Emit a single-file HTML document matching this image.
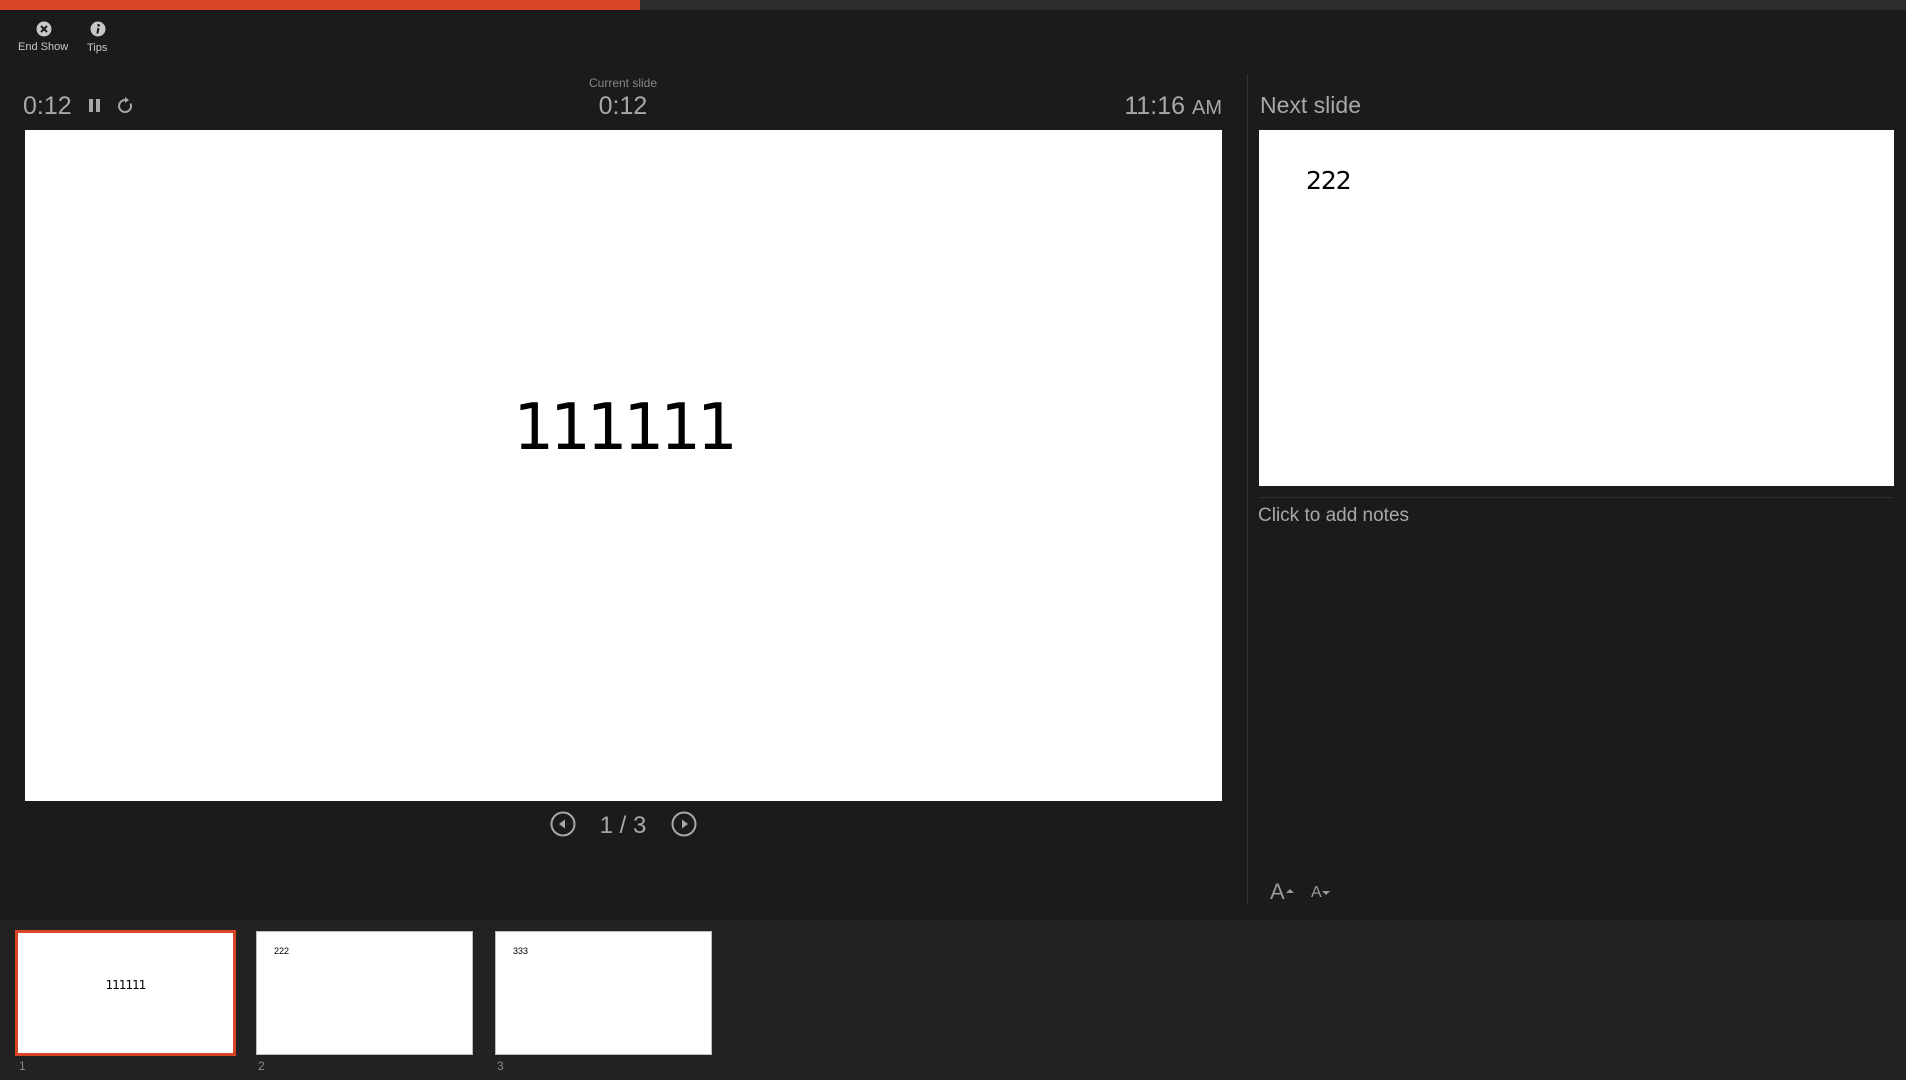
<!DOCTYPE html>
<html><head><meta charset="utf-8"><style>
*{margin:0;padding:0;box-sizing:border-box}
body{width:1906px;height:1080px;background:#1b1b1b;font-family:"Liberation Sans",sans-serif;color:#a8a8a8;position:relative;overflow:hidden}
.a{position:absolute}
.slide{background:#fff;position:absolute}
.num{font-size:14px;color:#888}
</style></head><body>
<div class="a" style="left:0;top:0;width:1906px;height:10px;background:#2c2c2c"></div>
<div class="a" style="left:0;top:0;width:640px;height:10px;background:#d84627"></div>

<svg class="a" style="left:36px;top:21px" width="16" height="16" viewBox="0 0 16 16"><circle cx="8" cy="8" r="7.5" fill="#c8c8c8"/><path d="M5 5L11 11M11 5L5 11" stroke="#1b1b1b" stroke-width="2"/></svg>
<div class="a" style="left:18px;top:41px;font-size:11px;color:#c8c8c8">End Show</div>
<svg class="a" style="left:90px;top:21px" width="16" height="16" viewBox="0 0 16 16"><circle cx="8" cy="8" r="7.5" fill="#c8c8c8"/><circle cx="8.6" cy="4.3" r="1.3" fill="#1b1b1b"/><path d="M8.5 7L7.3 12.5" stroke="#1b1b1b" stroke-width="2"/></svg>
<div class="a" style="left:87px;top:42px;font-size:11px;color:#c8c8c8">Tips</div>

<div class="a" style="left:23px;top:92px;font-size:25px">0:12</div>
<div class="a" style="left:89px;top:99px;width:4px;height:13px;background:#a8a8a8"></div>
<div class="a" style="left:96px;top:99px;width:4px;height:13px;background:#a8a8a8"></div>
<svg class="a" style="left:116px;top:97px" width="18" height="18" viewBox="0 0 18 18"><path d="M9 3A6 6 0 1 0 14.5 6.5" fill="none" stroke="#a8a8a8" stroke-width="2"/><path d="M9 0L13 3L9 6Z" fill="#a8a8a8"/></svg>
<div class="a" style="left:523px;top:76px;width:200px;text-align:center;font-size:12px;color:#888">Current slide</div>
<div class="a" style="left:523px;top:92px;width:200px;text-align:center;font-size:25px">0:12</div>
<div class="a" style="left:1000px;top:92px;width:222px;text-align:right;font-size:25px">11:16 <span style="font-size:20px">AM</span></div>

<div class="slide" style="left:25px;top:130px;width:1197px;height:671px"></div>
<div class="a" style="left:25px;top:391px;width:1197px;text-align:center;font-family:'DejaVu Sans',sans-serif;font-size:64px;letter-spacing:-4px;color:#000">111111</div>

<svg class="a" style="left:550px;top:811px" width="26" height="26" viewBox="0 0 26 26"><circle cx="13" cy="13" r="11.5" fill="none" stroke="#a8a8a8" stroke-width="2"/><path d="M9 13L15 8.5V17.5Z" fill="#a8a8a8"/></svg>
<div class="a" style="left:573px;top:812px;width:100px;text-align:center;font-size:24px">1 / 3</div>
<svg class="a" style="left:671px;top:811px" width="26" height="26" viewBox="0 0 26 26"><circle cx="13" cy="13" r="11.5" fill="none" stroke="#a8a8a8" stroke-width="2"/><path d="M17 13L11 8.5V17.5Z" fill="#a8a8a8"/></svg>

<div class="a" style="left:1247px;top:74px;width:1px;height:831px;background:#333"></div>
<div class="a" style="left:1260px;top:92px;font-size:23px">Next slide</div>
<div class="slide" style="left:1259px;top:130px;width:635px;height:356px"></div>
<div class="a" style="left:1306px;top:166px;font-family:'DejaVu Sans',sans-serif;font-size:25px;letter-spacing:-1px;color:#000">222</div>
<div class="a" style="left:1259px;top:497px;width:635px;height:1px;background:#2e2e2e"></div>
<div class="a" style="left:1258px;top:505px;font-size:19px">Click to add notes</div>
<div class="a" style="left:1270px;top:879px;font-size:22px;color:#999">A</div>
<div class="a" style="left:1286px;top:889px;width:0;height:0;border-left:4px solid transparent;border-right:4px solid transparent;border-bottom:4px solid #999"></div>
<div class="a" style="left:1311px;top:884px;font-size:16px;color:#999">A</div>
<div class="a" style="left:1322px;top:891px;width:0;height:0;border-left:4px solid transparent;border-right:4px solid transparent;border-top:4px solid #999"></div>

<div class="a" style="left:0;top:920px;width:1906px;height:160px;background:#222"></div>
<div class="slide" style="left:15px;top:930px;width:221px;height:126px;border:3px solid #d84627"></div>
<div class="a" style="left:15px;top:978px;width:221px;text-align:center;font-family:'DejaVu Sans',sans-serif;font-size:12px;letter-spacing:-1px;color:#000">111111</div>
<div class="slide" style="left:256px;top:931px;width:217px;height:124px;border:1px solid #bbb"></div>
<div class="a" style="left:274px;top:946px;font-size:9px;color:#000">222</div>
<div class="slide" style="left:495px;top:931px;width:217px;height:124px;border:1px solid #bbb"></div>
<div class="a" style="left:513px;top:946px;font-size:9px;color:#000">333</div>
<div class="a num" style="left:19px;top:1059px;font-size:12px">1</div>
<div class="a num" style="left:258px;top:1059px;font-size:12px">2</div>
<div class="a num" style="left:497px;top:1059px;font-size:12px">3</div>
</body></html>
